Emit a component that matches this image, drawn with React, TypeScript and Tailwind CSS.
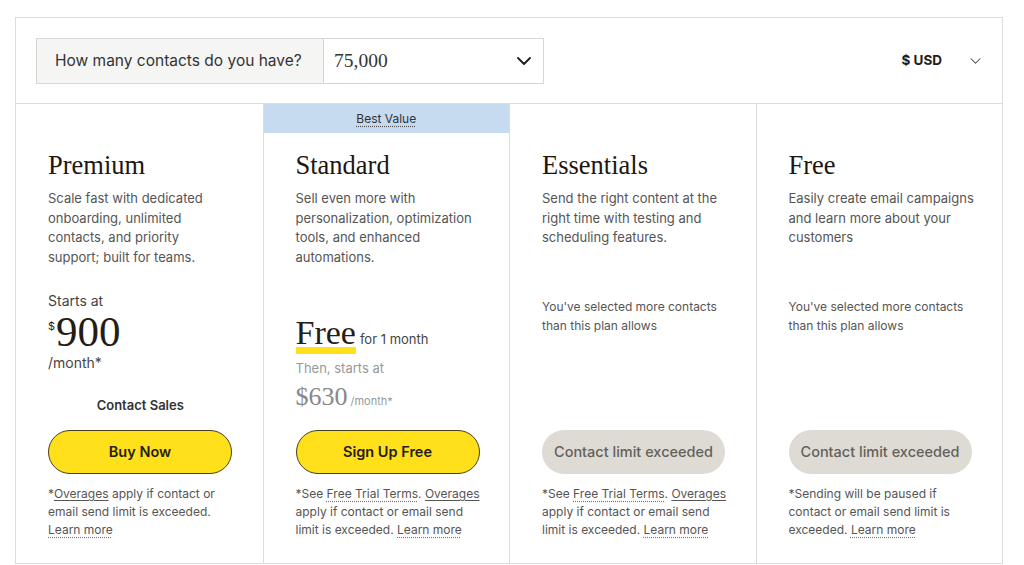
import React from "react";

const SANS = "font-['Inter','Noto_Sans',sans-serif]";
const SERIF = "font-['Liberation_Serif','DejaVu_Serif',serif]";

function Chevron({ className, stroke = 1.8 }: { className?: string; stroke?: number }) {
  return (
    <svg viewBox="0 0 14 8" className={className} fill="none">
      <polyline points="1,1 7,7 13,1" stroke="currentColor" strokeWidth={stroke} strokeLinecap="round" strokeLinejoin="round" />
    </svg>
  );
}

const Dotted = ({ children }: { children: React.ReactNode }) => (
  <span className="underline decoration-dotted decoration-[#777] underline-offset-[3px]">{children}</span>
);
const Solid = ({ children }: { children: React.ReactNode }) => (
  <span className="underline decoration-[#555] underline-offset-[2px]">{children}</span>
);

function Column({
  band,
  title,
  desc,
  price,
  button,
  foot,
  first,
}: {
  band?: boolean;
  title: string;
  desc: React.ReactNode;
  price: React.ReactNode;
  button: React.ReactNode;
  foot: React.ReactNode;
  first?: boolean;
}) {
  return (
    <div className={`flex flex-col ${first ? "" : "border-l border-[#dcdcdc]"}`}>
      <div className={`h-[29px] flex items-center justify-center ${band ? "bg-[#c6daf0]" : ""}`}>
        {band && (
          <span className="text-[12px] text-[#333] underline decoration-dotted decoration-[#555] underline-offset-[3px]">Best Value</span>
        )}
      </div>
      <div className="pl-[32px] pr-[20px] pt-[16px] flex flex-col">
        <div className={`${SERIF} text-[26.5px] leading-[32px] text-[#1e1711]`}>{title}</div>
        <div className="mt-[8px] h-[78px] text-[13px] leading-[19.5px] text-[#555] whitespace-nowrap">{desc}</div>
        <div className="h-[163px] flex flex-col">{price}</div>
        {button}
        <div className="mt-[11px] text-[12px] leading-[18px] text-[#555] whitespace-nowrap">{foot}</div>
      </div>
    </div>
  );
}

const YellowBtn = ({ label }: { label: string }) => (
  <div className="h-[44px] w-[184px] rounded-full bg-[#ffe01b] border border-[#4a3f1c] flex items-center justify-center text-[14.5px] font-semibold text-[#241c15]">
    {label}
  </div>
);
const GrayBtn = () => (
  <div className="h-[44px] w-[183px] rounded-full bg-[#dedbd5] flex items-center justify-center text-[14.5px] font-medium text-[#64605a]">
    Contact limit exceeded
  </div>
);

const Exceeded = () => (
  <div className="mt-[30px] text-[12px] leading-[19px] text-[#555] whitespace-nowrap">
    You've selected more contacts
    <br />
    than this plan allows
  </div>
);

export default function App() {
  return (
    <div className={`${SANS} w-[1024px] h-[565px] bg-white overflow-hidden`}>
      <div className="ml-[15px] mt-[17px] w-[988px] border border-[#dcdcdc]">
        <div className="h-[86px] px-[20px] flex items-center justify-between border-b border-[#dcdcdc]">
          <div className="flex h-[46px] border border-[#d6d6d6]">
            <div className="w-[287px] bg-[#f5f5f3] border-r border-[#d6d6d6] flex items-center pl-[18px] text-[15.5px] text-[#333]">
              How many contacts do you have?
            </div>
            <div className="w-[219px] flex items-center justify-between pl-[10px] pr-[12px] bg-white">
              <span className={`${SERIF} text-[19.5px] text-[#333]`}>75,000</span>
              <Chevron className="w-[14px] h-[8px] text-[#241c15]" stroke={1.8} />
            </div>
          </div>
          <div className="flex items-center gap-[28px] pr-[1px]">
            <span className="text-[13.5px] font-bold text-[#241c15]">$ USD</span>
            <Chevron className="w-[11px] h-[6px] text-[#444]" stroke={1.4} />
          </div>
        </div>
        <div className="grid grid-cols-4 h-[459px]">
          <Column
            first
            title="Premium"
            desc={
              <>
                Scale fast with dedicated
                <br />
                onboarding, unlimited
                <br />
                contacts, and priority
                <br />
                support; built for teams.
              </>
            }
            price={
              <>
                <div className="mt-[24px] text-[14px] leading-[20px] text-[#444]">Starts at</div>
                <div className="flex items-start mt-[2px] text-[#241c15]">
                  <span className="text-[11px] mt-[5px] mr-[1px]">$</span>
                  <span className={`${SERIF} text-[43px] leading-[38px]`}>900</span>
                </div>
                <div className="mt-[2px] text-[14px] leading-[20px] text-[#444]">/month*</div>
                <div className="mt-[23px] text-center pr-[10px] text-[13px] font-semibold text-[#333]">Contact Sales</div>
              </>
            }
            button={<YellowBtn label="Buy Now" />}
            foot={
              <>
                *<Solid>Overages</Solid> apply if contact or
                <br />
                email send limit is exceeded.
                <br />
                <Dotted>Learn more</Dotted>
              </>
            }
          />
          <Column
            band
            title="Standard"
            desc={
              <>
                Sell even more with
                <br />
                personalization, optimization
                <br />
                tools, and enhanced
                <br />
                automations.
              </>
            }
            price={
              <>
                <div className="mt-[49px] flex items-baseline">
                  <span className="relative inline-block">
                    <span className="absolute left-0 right-0 top-[31px] h-[7px] bg-[#ffe01b]" />
                    <span className={`${SERIF} relative text-[34px] leading-[34px] text-[#241c15]`}>Free</span>
                  </span>
                  <span className="ml-[4px] text-[13px] text-[#444]">for 1 month</span>
                </div>
                <div className="mt-[9px] text-[13px] leading-[18px] text-[#999]">Then, starts at</div>
                <div className="mt-[5px] flex items-baseline">
                  <span className={`${SERIF} text-[26px] leading-[30px] text-[#888]`}>$630</span>
                  <span className="ml-[3px] text-[11px] text-[#999]">/month*</span>
                </div>
              </>
            }
            button={<YellowBtn label="Sign Up Free" />}
            foot={
              <>
                *See <Dotted>Free Trial Terms</Dotted>. <Solid>Overages</Solid>
                <br />
                apply if contact or email send
                <br />
                limit is exceeded. <Dotted>Learn more</Dotted>
              </>
            }
          />
          <Column
            title="Essentials"
            desc={
              <>
                Send the right content at the
                <br />
                right time with testing and
                <br />
                scheduling features.
              </>
            }
            price={<Exceeded />}
            button={<GrayBtn />}
            foot={
              <>
                *See <Dotted>Free Trial Terms</Dotted>. <Solid>Overages</Solid>
                <br />
                apply if contact or email send
                <br />
                limit is exceeded. <Dotted>Learn more</Dotted>
              </>
            }
          />
          <Column
            title="Free"
            desc={
              <>
                Easily create email campaigns
                <br />
                and learn more about your
                <br />
                customers
              </>
            }
            price={<Exceeded />}
            button={<GrayBtn />}
            foot={
              <>
                *Sending will be paused if
                <br />
                contact or email send limit is
                <br />
                exceeded. <Dotted>Learn more</Dotted>
              </>
            }
          />
        </div>
      </div>
    </div>
  );
}
